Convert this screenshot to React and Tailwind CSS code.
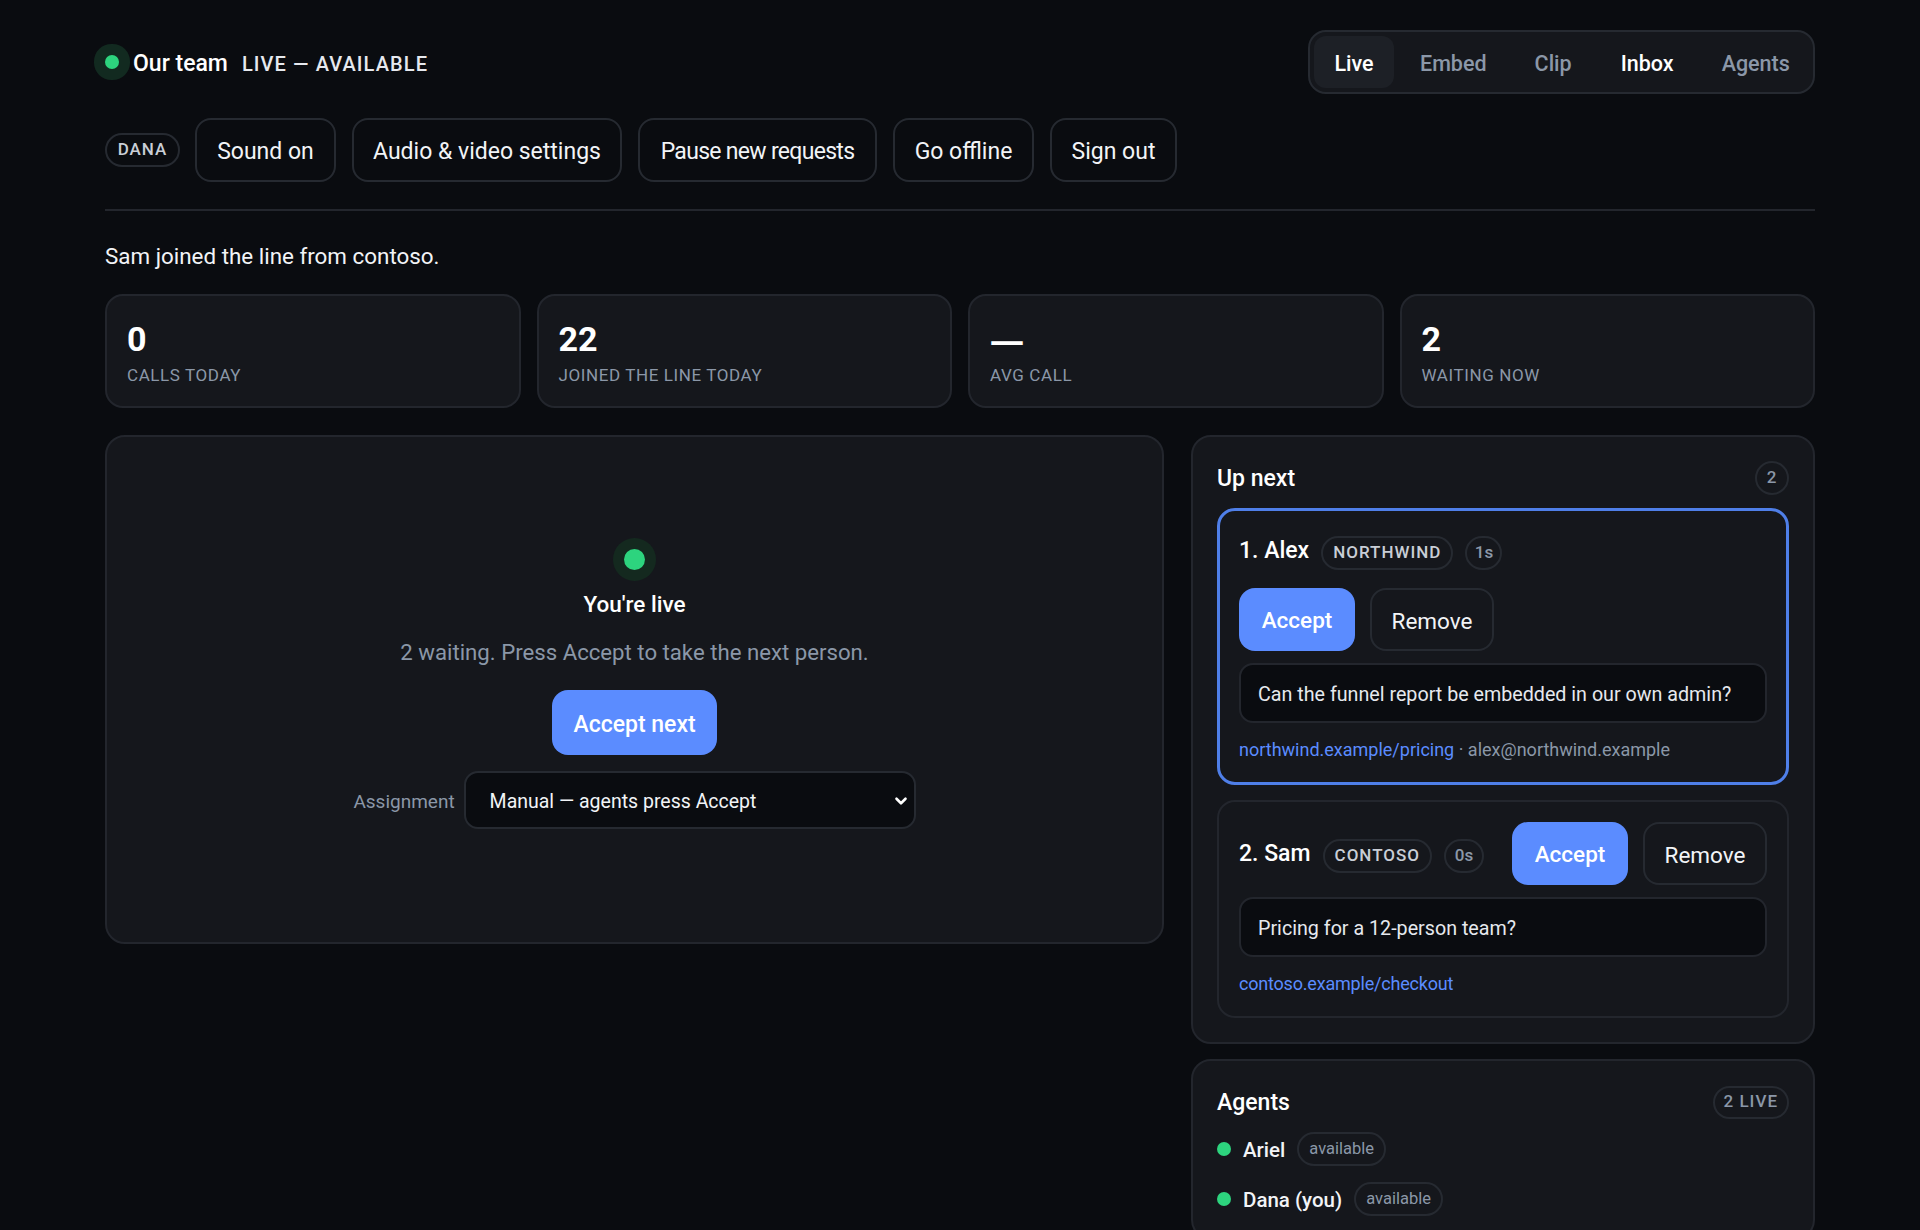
import React from 'react';
import { ChevronDown } from 'lucide-react';

const Pill = ({ children, className = '' }) => (
    <span className={`inline-flex items-center justify-center h-[34px] px-[10px] rounded-full border-2 border-[#262a31] text-[17px] font-medium text-[#c9ced6] tracking-[1px] ${className}`}>
        {children}
    </span>
);

const GhostButton = ({ children, className = '' }) => (
    <button className={`h-[64px] pt-[4px] rounded-[16px] border-2 border-[#262a31] text-[23px] text-[#f2f4f7] ${className}`}>
        {children}
    </button>
);

const AcceptButton = ({ children, className = '' }) => (
    <button className={`h-[63px] w-[116px] pt-[3px] rounded-[16px] bg-[#5b8cff] text-[22.5px] font-medium text-white ${className}`}>
        {children}
    </button>
);

const Stat = ({ value, label, dash }) => (
    <div className="h-[114px] rounded-[18px] border-2 border-[#23262d] bg-[#15171c] px-[20px] pt-[22px]">
        <div className={`text-[34px] leading-[42px] font-bold text-white ${dash ? "font-['Noto_Sans']" : ''}`}>{value}</div>
        <div className="text-[17px] leading-[24px] mt-[3px] uppercase tracking-[0.6px] text-[#8b97a8]">{label}</div>
    </div>
);

const Message = ({ children }) => (
    <div className="h-[60px] pt-[3px] flex items-center rounded-[14px] border-2 border-[#23262d] bg-[#0a0c10] px-[17px] text-[19.7px] text-[#e6e9ee]">
        {children}
    </div>
);

const Agent = ({ name, className = '' }) => (
    <div className={`flex items-center h-[34px] ${className}`}>
        <span className="w-[14px] h-[14px] rounded-full bg-[#2dd47e]" />
        <span className="ml-[12px] pt-[2px] text-[20.5px] font-medium text-[#f2f4f7]">{name}</span>
        <span className="ml-[12px] inline-flex items-center h-[34px] px-[10px] rounded-full border-2 border-[#262a31] text-[16.5px] text-[#8b97a8]">available</span>
    </div>
);

export default function App() {
    return (
        <div className="h-[1230px] overflow-hidden bg-[#0a0c10] font-['Roboto',sans-serif] text-[#f2f4f7]">
            <div className="w-[1710px] mx-auto pt-[30px]">
                {/* top bar */}
                <div className="flex items-center justify-between h-[64px]">
                    <div className="flex items-center">
                        <span className="w-[14px] h-[14px] rounded-full bg-[#2dd47e] shadow-[0_0_0_11px_#122a20]" />
                        <span className="ml-[14px] pt-[4px] text-[23px] font-medium text-white">Our team</span>
                        <span className="ml-[14px] pt-[4px] text-[20px] font-medium uppercase tracking-[1.1px] text-[#e6e9ee]">Live — available</span>
                    </div>
                    <div className="flex items-center h-[64px] w-[507px] px-[4px] rounded-[18px] border-2 border-[#262a31] bg-[#15171c] text-[21.5px] font-medium">
                        <span className="flex items-center justify-center w-[80px] h-[52px] pt-[4px] rounded-[12px] bg-[#1d2026] text-white">Live</span>
                        <span className="ml-[26px] pt-[4px] text-[#8b97a8]">Embed</span>
                        <span className="ml-[48px] pt-[4px] text-[#8b97a8]">Clip</span>
                        <span className="ml-[49px] pt-[4px] text-white">Inbox</span>
                        <span className="ml-[48px] pt-[4px] text-[#8b97a8]">Agents</span>
                    </div>
                </div>

                {/* actions */}
                <div className="flex items-center gap-[16px] mt-[24px]">
                    <Pill className="w-[75px] mr-[-1px]">DANA</Pill>
                    <GhostButton className="w-[141px]">Sound on</GhostButton>
                    <GhostButton className="w-[270px]">Audio &amp; video settings</GhostButton>
                    <GhostButton className="w-[239px] tracking-[-0.7px]">Pause new requests</GhostButton>
                    <GhostButton className="w-[141px]">Go offline</GhostButton>
                    <GhostButton className="w-[127px]">Sign out</GhostButton>
                </div>

                <div className="h-[2px] mt-[27px] bg-[#23262d]" />

                <p className="mt-[30px] text-[22.4px] leading-[30px] text-[#f2f4f7]">Sam joined the line from contoso.</p>

                {/* stats */}
                <div className="grid grid-cols-4 gap-[16px] mt-[23px]">
                    <Stat value="0" label="Calls today" />
                    <Stat value="22" label="Joined the line today" />
                    <Stat value="—" label="Avg call" dash />
                    <Stat value="2" label="Waiting now" />
                </div>

                <div className="grid grid-cols-[1059px_624px] gap-[27px] items-start mt-[27px]">
                    {/* live panel */}
                    <div className="h-[509px] rounded-[20px] border-2 border-[#23262d] bg-[#15171c] flex flex-col items-center pt-[112px]">
                        <span className="w-[21px] h-[21px] rounded-full bg-[#2dd47e] shadow-[0_0_0_11px_#14291f]" />
                        <div className="mt-[19px] text-[22.5px] leading-[30px] font-medium text-white">You're live</div>
                        <p className="mt-[18px] text-[22.2px] leading-[30px] text-[#8b97a8]">2 waiting. Press Accept to take the next person.</p>
                        <button className="mt-[23px] h-[65px] w-[165px] pt-[5px] rounded-[16px] bg-[#5b8cff] text-[23px] font-medium text-white">Accept next</button>
                        <div className="flex items-center gap-[9px] mt-[16px]">
                            <span className="pt-[5px] text-[19px] text-[#8b97a8]">Assignment</span>
                            <div className="relative">
                                <select className="appearance-none h-[58px] w-[452px] pt-[4px] rounded-[14px] border-2 border-[#262a31] bg-[#0a0c10] px-[24px] text-[19.5px] text-[#f2f4f7]">
                                    <option>Manual — agents press Accept</option>
                                </select>
                                <ChevronDown className="absolute right-[6px] top-[21px] w-[18px] h-[18px] text-white" strokeWidth={3.5} />
                            </div>
                        </div>
                    </div>

                    <div className="flex flex-col gap-[15px]">
                        {/* queue */}
                        <div className="rounded-[20px] border-2 border-[#23262d] bg-[#15171c] px-[24px] pt-[24px] pb-[24px]">
                            <div className="flex items-center justify-between h-[34px]">
                                <h2 className="pt-[2px] text-[23px] font-medium text-white">Up next</h2>
                                <Pill className="w-[34px] !px-0 !text-[#8b97a8]">2</Pill>
                            </div>
                            <div className="mt-[13px] rounded-[18px] border-[3px] border-[#4f7fe8] px-[19px] pt-[25px] h-[277px]">
                                <div className="flex items-center gap-[12px]">
                                    <span className="mt-[-4px] text-[23px] font-medium text-white">1. Alex</span>
                                    <Pill>NORTHWIND</Pill>
                                    <Pill className="w-[37px] !px-0 !text-[#8b97a8] !tracking-normal">1s</Pill>
                                </div>
                                <div className="flex gap-[15px] mt-[18px]">
                                    <AcceptButton>Accept</AcceptButton>
                                    <GhostButton className="!h-[63px] w-[124px] !text-[22.5px]">Remove</GhostButton>
                                </div>
                                <div className="mt-[12px]"><Message>Can the funnel report be embedded in our own admin?</Message></div>
                                <div className="mt-[15px] text-[18px] leading-[24px] text-[#8b97a8]">
                                    <a className="text-[#5b8cff]">northwind.example/pricing</a> · alex@northwind.example
                                </div>
                            </div>
                            <div className="mt-[15px] rounded-[18px] border-2 border-[#23262d] px-[20px] pt-[20px] h-[218px]">
                                <div className="flex items-center gap-[12px]">
                                    <span className="mt-[2px] text-[23px] font-medium text-white">2. Sam</span>
                                    <Pill className="mt-[5px]">CONTOSO</Pill>
                                    <Pill className="mt-[5px] w-[40px] !px-0 !text-[#8b97a8] !tracking-normal">0s</Pill>
                                    <div className="ml-auto flex gap-[15px]">
                                        <AcceptButton>Accept</AcceptButton>
                                        <GhostButton className="!h-[63px] w-[124px] !text-[22.5px]">Remove</GhostButton>
                                    </div>
                                </div>
                                <div className="mt-[12px]"><Message>Pricing for a 12-person team?</Message></div>
                                <div className="mt-[15px] text-[18px] leading-[24px] tracking-[-0.2px]">
                                    <a className="text-[#5b8cff]">contoso.example/checkout</a>
                                </div>
                            </div>
                        </div>

                        {/* agents */}
                        <div className="rounded-[20px] border-2 border-[#23262d] bg-[#15171c] px-[24px] pt-[24px] pb-[22px]">
                            <div className="flex items-center justify-between h-[34px]">
                                <h2 className="pt-[2px] text-[23px] font-medium text-white">Agents</h2>
                                <Pill className="!text-[#8b97a8] !h-[33px] !px-[9px]">2 LIVE</Pill>
                            </div>
                            <Agent name="Ariel" className="mt-[13px]" />
                            <Agent name="Dana (you)" className="mt-[16px]" />
                        </div>
                    </div>
                </div>
            </div>
        </div>
    );
}
